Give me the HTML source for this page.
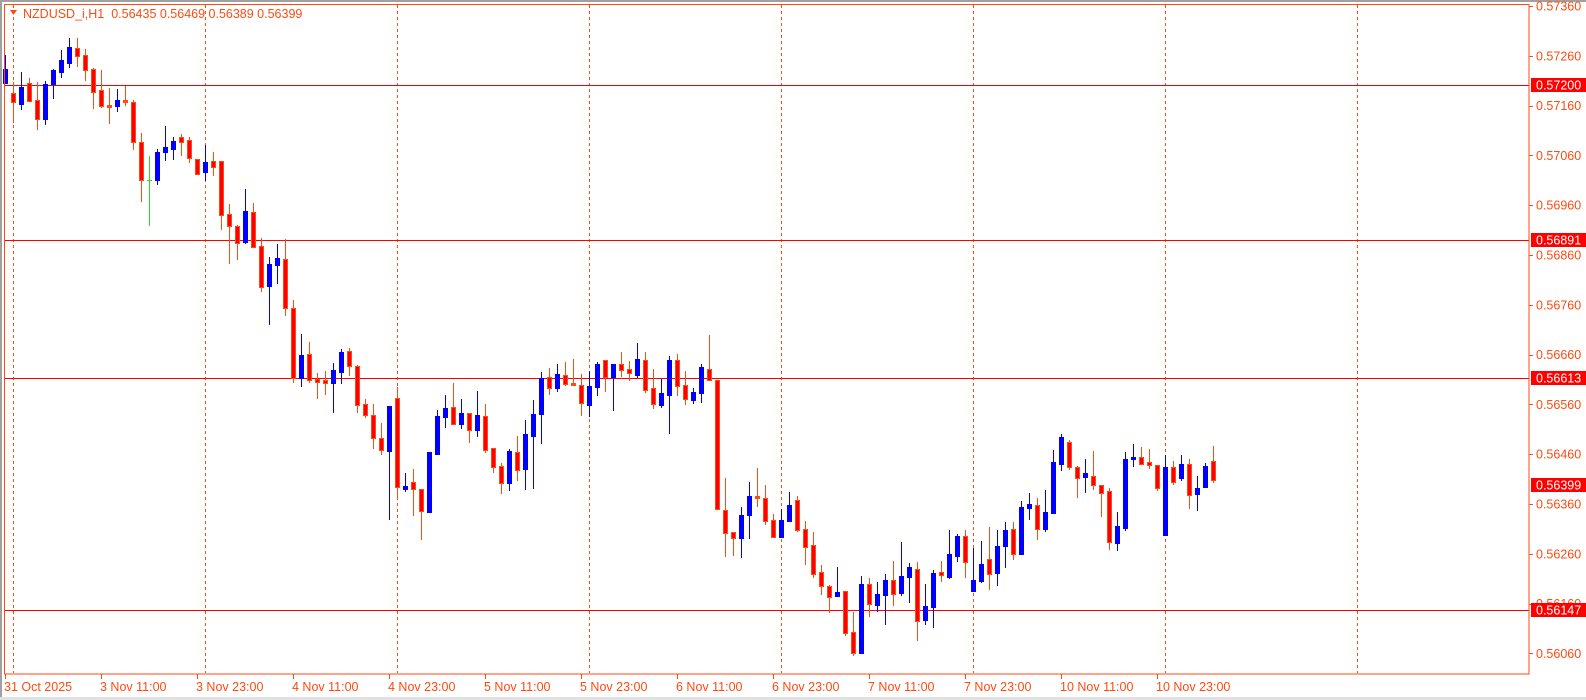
<!DOCTYPE html>
<html><head><meta charset="utf-8">
<style>
html,body{margin:0;padding:0;background:#fff;width:1586px;height:700px;overflow:hidden}
svg{display:block}
text{font-family:"Liberation Sans",sans-serif}
</style></head>
<body>
<svg id="s" width="1586" height="700" xmlns="http://www.w3.org/2000/svg">
<rect x="0" y="0" width="1586" height="700" fill="#fff"/>
<rect x="0" y="0" width="1586" height="2" fill="#a0a0a0"/>
<rect x="0" y="0" width="2" height="700" fill="#a0a0a0"/>
<rect x="0" y="697" width="1586" height="3" fill="#e0e0e0"/>
<g id="grid" stroke="#ff4a10" stroke-width="1" stroke-dasharray="3,3"></g>
<g id="hl" fill="#ff0000">
<rect x="4" y="85" width="1525" height="1"/>
<rect x="4" y="240" width="1525" height="1"/>
<rect x="4" y="378" width="1525" height="1"/>
<rect x="4" y="610" width="1525" height="1"/>
</g>
<g id="c"></g>
<rect x="4.5" y="4.5" width="1524.5" height="669.5" fill="none" stroke="#ff4a10" stroke-width="1"/>
<g id="ax" fill="#ff4a10" font-size="12.5"></g>
<g id="tx" fill="#ff4a10" font-size="12.5">
<text x="4" y="691">31 Oct 2025</text>
<text x="100" y="691">3 Nov 11:00</text>
<text x="196" y="691">3 Nov 23:00</text>
<text x="292" y="691">4 Nov 11:00</text>
<text x="388" y="691">4 Nov 23:00</text>
<text x="484" y="691">5 Nov 11:00</text>
<text x="580" y="691">5 Nov 23:00</text>
<text x="676" y="691">6 Nov 11:00</text>
<text x="772" y="691">6 Nov 23:00</text>
<text x="868" y="691">7 Nov 11:00</text>
<text x="964" y="691">7 Nov 23:00</text>
<text x="1060" y="691">10 Nov 11:00</text>
<text x="1156" y="691">10 Nov 23:00</text>
</g>
<polygon points="10,10 17,10 13.5,15" fill="#ff4a10"/>
<text x="23" y="18" font-size="12.5" fill="#ff4a10">NZDUSD_i,H1&#160; 0.56435 0.56469 0.56389 0.56399</text>
<g id="box"></g>
</svg>
<script>
var NS="http://www.w3.org/2000/svg";
function el(p,t,a,txt){var e=document.createElementNS(NS,t);for(var k in a)e.setAttribute(k,a[k]);if(txt)e.textContent=txt;document.getElementById(p).appendChild(e);return e;}
// grid
for(var k=0;k<8;k++){var x=13+192*k+0.5;el("grid","line",{x1:x,y1:5,x2:x,y2:673});}
// time ticks
for(var k=0;k<13;k++){el("tx","rect",{x:5+96*k,y:674,width:1,height:5});}
// price axis
for(var i=0;i<=13;i++){var p=0.5736-i*0.001;var y=6+i*49.8;
 el("ax","rect",{x:1529,y:Math.round(y),width:4,height:1});
 el("ax","text",{x:1536,y:(y+4.5).toFixed(1)},p.toFixed(5));}
var boxes=[[85,"0.57200"],[240,"0.56891"],[378,"0.56613"],[485,"0.56399"],[610,"0.56147"]];
boxes.forEach(function(b){el("box","rect",{x:1531,y:b[0]-7,width:55,height:14,fill:"#ff0000"});
 el("box","text",{x:1536,y:b[0]+4.5,"font-size":"12.5",fill:"#fff"},b[1]);});
var D="b 69 83 55 83|r 93 102 82 122|b 87 104 72 109|r 83 101 78 101|r 100 119 82 129|b 84 119 81 124|b 70 84 69 98|b 60 72 50 77|b 47 63 38 67|r 48 56 38 66|r 55 70 49 80|r 69 92 68 108|r 90 106 70 107|r 105 107 88 123|b 100 106 89 111|r 100 102 86 105|r 102 142 100 149|r 142 180 133 201|g 180 180 156 225|b 152 180 149 184|b 147 152 126 160|b 141 149 137 159|r 137 142 134 155|r 140 158 137 162|r 159 174 159 174|b 162 172 145 180|r 161 167 152 175|r 161 215 161 229|r 214 226 204 263|r 226 243 225 259|b 211 242 189 243|r 212 247 203 247|r 246 287 238 291|b 264 286 257 324|b 258 265 244 283|r 259 308 239 315|r 308 378 300 382|b 355 378 334 386|r 354 380 342 382|r 379 382 373 398|r 380 383 371 394|b 370 383 363 412|b 352 372 349 383|r 351 366 348 375|r 366 405 365 412|r 404 415 399 417|r 415 438 404 448|r 438 450 423 454|b 406 451 406 519|r 398 487 387 499|b 486 489 473 491|r 482 489 469 515|r 489 511 489 539|b 452 512 452 512|b 416 454 410 454|b 408 417 395 427|r 407 424 383 424|b 413 424 399 428|r 413 430 413 442|b 415 430 391 436|r 416 450 404 452|r 448 467 448 472|r 466 483 463 493|b 451 483 449 490|r 452 470 436 480|b 434 469 420 489|b 414 436 400 488|b 378 414 372 443|r 377 388 368 394|b 374 388 364 391|r 375 384 362 385|r 383 385 359 385|r 385 403 374 415|b 386 405 371 416|b 364 387 362 395|r 360 377 360 391|b 364 377 364 410|r 364 370 352 376|r 369 373 361 380|b 359 375 343 377|r 360 390 352 392|r 388 404 369 408|b 393 405 379 407|b 360 395 356 433|r 360 386 354 395|r 385 399 371 404|b 392 400 388 403|b 367 393 364 402|r 369 380 335 380|r 380 509 380 509|r 510 533 478 556|r 532 538 532 555|b 515 538 507 557|b 496 515 482 538|r 496 498 468 506|r 498 521 485 524|r 520 537 514 537|b 520 537 509 537|b 505 521 492 521|r 500 530 496 531|r 529 547 521 564|r 545 574 532 577|r 572 586 565 594|r 586 597 585 612|b 592 596 567 596|r 591 633 591 635|r 632 653 612 655|b 584 653 576 653|r 584 604 578 616|b 594 605 582 611|b 580 595 574 624|r 580 594 561 605|b 576 593 542 595|b 567 577 563 602|r 569 621 562 640|b 606 620 584 624|b 573 607 570 627|r 572 575 561 581|b 554 577 530 578|b 536 556 534 561|r 536 562 530 577|b 580 591 548 591|b 564 581 541 582|r 559 574 527 589|b 546 573 530 585|b 530 546 522 567|r 529 554 522 559|b 507 554 501 554|b 504 508 493 519|r 505 529 498 539|b 512 529 490 531|b 462 513 450 513|b 437 464 434 470|r 442 467 440 469|r 467 478 466 497|b 473 477 459 492|r 476 485 451 489|r 485 493 485 516|r 491 542 488 549|b 526 543 512 550|b 459 528 452 530|b 457 459 444 466|r 457 464 447 464|r 462 465 449 468|r 465 488 465 490|b 467 535 455 535|r 467 482 461 484|b 464 478 455 480|r 464 495 459 508|b 488 494 476 510|b 466 487 463 487|r 461 480 446 482";
D.split("|").forEach(function(s,i){var a=s.split(" ");var t=a[0],o=+a[1],c=+a[2],h=+a[3],l=+a[4];var x=5+8*i;
 var wc=t=="r"?"#ff4a10":(t=="g"?"#22dd22":"#0000ff");
 el("c","rect",{x:x,y:h,width:1,height:Math.max(1,l-h+1),fill:wc});
 var bh=c-o;
 if(t=="g"){el("c","rect",{x:x-2,y:o,width:5,height:1,fill:wc});return;}
 if(bh<=2){el("c","rect",{x:x-2,y:o,width:5,height:Math.max(2,bh+1),fill:wc});return;}
 if(t=="r"){el("c","rect",{x:x-2,y:o,width:5,height:bh+1,fill:"#ff4a10"});
  el("c","rect",{x:x-1,y:o+1,width:3,height:bh-1,fill:"#ff0000"});}
 else el("c","rect",{x:x-2,y:o,width:5,height:bh+1,fill:"#0000ff"});
});
</script>
</body></html>
